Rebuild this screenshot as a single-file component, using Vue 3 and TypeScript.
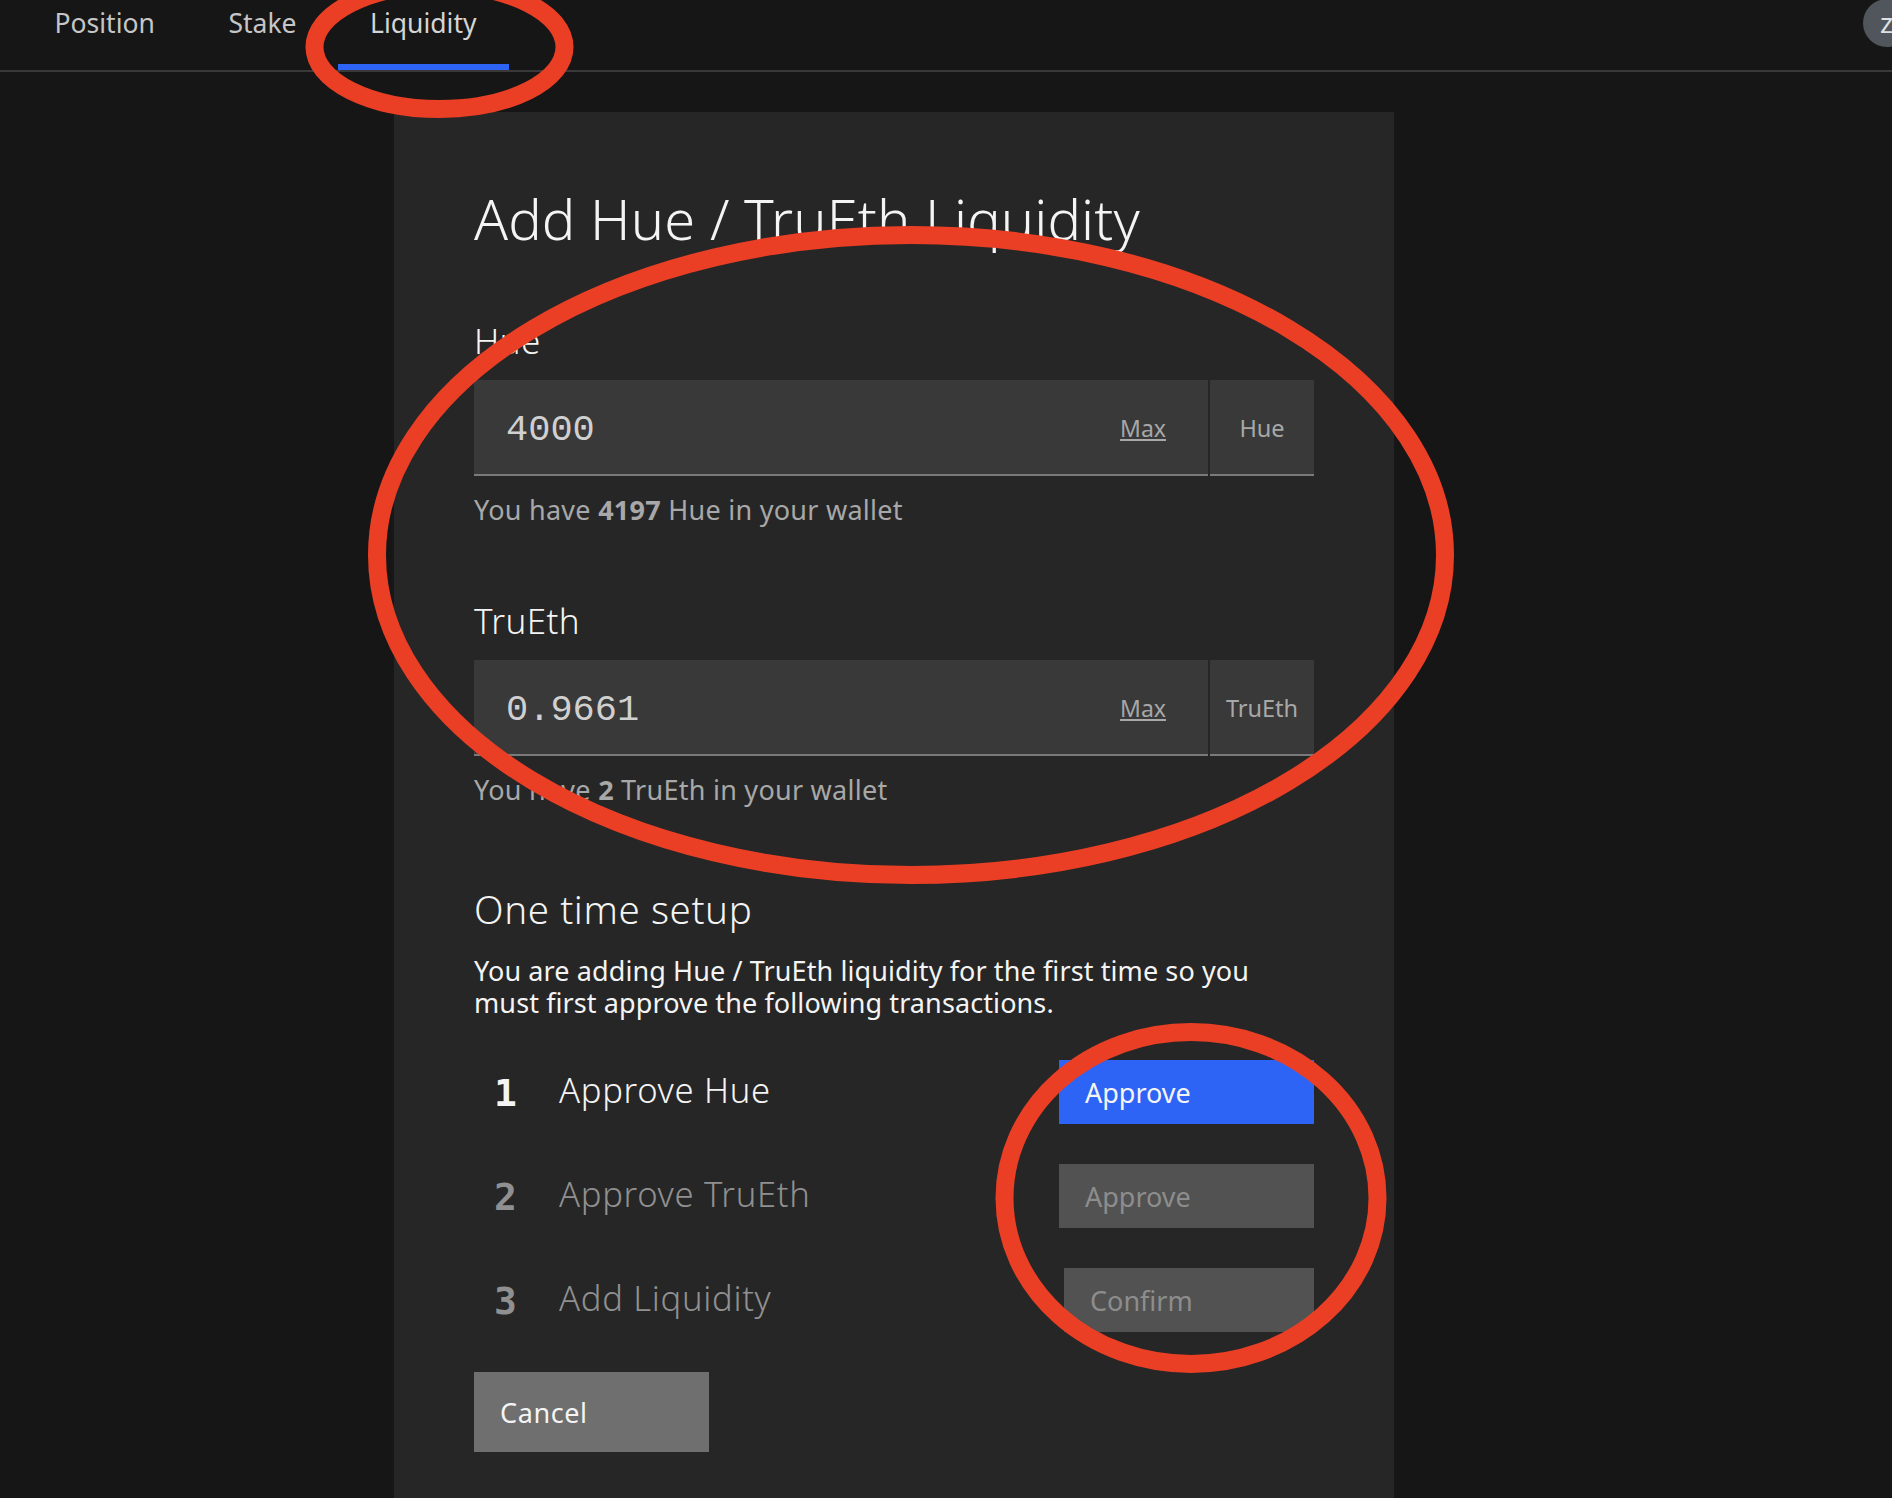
<script setup lang="ts">
interface Field { name: string; value: string; balance: string }
interface Step { num: string; label: string; action: string; kind: string }

const fields: Field[] = [
  { name: 'Hue', value: '4000', balance: '4197' },
  { name: 'TruEth', value: '0.9661', balance: '2' },
]
const steps: Step[] = [
  { num: '1', label: 'Approve Hue', action: 'Approve', kind: 'active' },
  { num: '2', label: 'Approve TruEth', action: 'Approve', kind: 'off' },
  { num: '3', label: 'Add Liquidity', action: 'Confirm', kind: 'off narrow' },
]
const tabs = ['Position', 'Stake', 'Liquidity']
</script>

<template>
  <div class="page">
    <header class="nav">
      <a v-for="t in tabs" :key="t" class="tab" :class="{ current: t === 'Liquidity' }">{{ t }}</a>
      <div class="avatar">z</div>
    </header>
    <main class="main">
      <section class="card">
        <h1 class="title">Add Hue / TruEth Liquidity</h1>
        <div v-for="f in fields" :key="f.name" class="field">
          <label class="label">{{ f.name }}</label>
          <div class="inputrow">
            <div class="input">
              <span class="value">{{ f.value }}</span>
              <a class="max">Max</a>
            </div>
            <div class="suffix">{{ f.name }}</div>
          </div>
          <p class="helper">You have <b>{{ f.balance }}</b> {{ f.name }} in your wallet</p>
        </div>
        <h2 class="setup">One time setup</h2>
        <p class="intro">You are adding Hue / TruEth liquidity for the first time so you<br />must first approve the following transactions.</p>
        <div class="steps">
          <div v-for="s in steps" :key="s.num" class="step" :class="s.kind">
            <span class="num">{{ s.num }}</span>
            <span class="steplabel">{{ s.label }}</span>
            <button class="btn">{{ s.action }}</button>
          </div>
        </div>
        <button class="cancel">Cancel</button>
      </section>
    </main>
    <svg class="marks" width="1892" height="1498" viewBox="0 0 1892 1498" fill="none" stroke="#ea3f25">
      <ellipse cx="439.5" cy="47" rx="125" ry="62" stroke-width="18" />
      <ellipse cx="911" cy="555" rx="534" ry="320" stroke-width="18" />
      <ellipse cx="1191" cy="1198" rx="186.5" ry="166" stroke-width="18" />
    </svg>
  </div>
</template>

<style>
html, body { margin: 0; background: #161616; }
</style>

<style scoped>
.page {
  position: relative;
  height: 1498px;
  overflow: hidden;
  background: #161616;
  font-family: "Noto Sans", "Open Sans", sans-serif;
  color: #f4f4f4;
}
.nav {
  display: flex;
  gap: 8.5px;
  height: 70px;
  padding-left: 22px;
  border-bottom: 2px solid #393939;
}
.tab {
  height: 70px;
  box-sizing: border-box;
  padding: 3px 32.5px 0;
  font-size: 26.5px;
  line-height: 40px;
  color: #c6c6c6;
}
.tab.current {
  color: #d4d4d4;
  border-bottom: 6px solid #2d64f5;
}
.avatar {
  margin-left: auto;
  margin-right: -19px;
  margin-top: -1px;
  width: 48px;
  height: 48px;
  border-radius: 50%;
  background: #50565c;
  color: #dde1e6;
  font-size: 28px;
  line-height: 46px;
  padding-left: 17px;
  box-sizing: border-box;
}
.main {
  padding: 40px 0 0 394px;
}
.card {
  width: 1000px;
  height: 1386px;
  box-sizing: border-box;
  padding: 74px 80px 0;
  background: #262626;
}
.title {
  margin: 0 0 71px;
  font-size: 56px;
  letter-spacing: 0.1px;
  font-weight: 300;
  line-height: 64px;
}
.field { margin-bottom: 73px; }
.field:last-of-type { margin-bottom: 0; }
.label {
  display: block;
  font-size: 35px;
  letter-spacing: 0.4px;
  font-weight: 300;
  line-height: 40px;
  margin-bottom: 19px;
}
.inputrow { display: flex; gap: 2px; }
.input {
  flex: 1;
  height: 96px;
  box-sizing: border-box;
  display: flex;
  align-items: center;
  justify-content: space-between;
  padding: 0 42px 0 32px;
  background: #393939;
  border-bottom: 2px solid #7a7a7a;
}
.value {
  padding-top: 6px;
  font-family: "Liberation Mono", monospace;
  font-size: 37px;
  color: #d0d0d0;
}
.max {
  padding-top: 2px;
  font-size: 23px;
  color: #a8a8a8;
  text-decoration: underline;
}
.suffix {
  width: 104px;
  height: 96px;
  box-sizing: border-box;
  display: flex;
  align-items: center;
  justify-content: center;
  padding-top: 2px;
  background: #393939;
  border-bottom: 2px solid #7a7a7a;
  font-size: 23.5px;
  color: #a8a8a8;
}
.helper {
  margin: 16px 0 0;
  font-size: 27px;
  letter-spacing: 0.26px;
  line-height: 36px;
  color: #a8a8a8;
}
.helper b { font-weight: 700; }
.setup {
  margin: 79px 0 24px;
  font-size: 38.5px;
  letter-spacing: 0.6px;
  font-weight: 300;
  line-height: 44px;
}
.intro {
  margin: 0 0 41px;
  font-size: 27px;
  letter-spacing: 0.1px;
  line-height: 32px;
}
.steps {
  display: flex;
  flex-direction: column;
  gap: 40px;
}
.step {
  display: flex;
  align-items: center;
  height: 64px;
  color: #f4f4f4;
}
.step.off { color: #909090; }
.num {
  width: 85px;
  padding: 2px 0 0 20px;
  box-sizing: border-box;
  font-family: "DejaVu Sans Mono", monospace;
  font-weight: 700;
  font-size: 38px;
}
.steplabel {
  flex: 1;
  padding-bottom: 5px;
  font-size: 34.6px;
  letter-spacing: 0.7px;
  font-weight: 300;
}
.btn, .cancel {
  border: 0;
  border-radius: 0;
  font-family: inherit;
  font-size: 27px;
  text-align: left;
  padding: 0 0 0 26px;
  color: #f4f4f4;
}
.btn {
  width: 255px;
  height: 64px;
  background: #2d64f5;
}
.step.off .btn { background: #525252; color: #8d8d8d; }
.step.narrow .btn { width: 250px; }
.cancel {
  display: block;
  margin-top: 40px;
  width: 235px;
  height: 80px;
  letter-spacing: 0.6px;
  background: #6f6f6f;
}
.marks {
  position: absolute;
  inset: 0;
  pointer-events: none;
}
</style>
